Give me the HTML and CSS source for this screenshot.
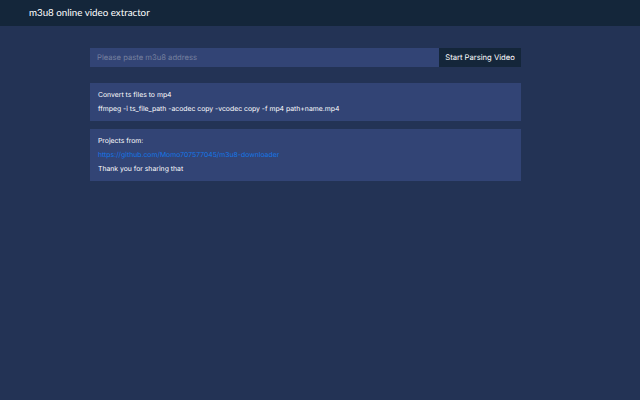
FILE: index.html
```
<!DOCTYPE html>
<html lang="en">
<head>
<meta charset="UTF-8">
<meta name="viewport" content="width=device-width, initial-scale=1.0">
<title>m3u8 online video extractor</title>
<link rel="stylesheet" href="styles.css">
</head>
<body>

<div class="header">
    <span class="logo">m3u8 online video extractor</span>
</div>

<div class="contenuto">
    <div class="ricerca">
        <input class="casella" type="text" placeholder="Please paste m3u8 address">
        <button class="button">Start Parsing Video</button>
    </div>

    <div class="card">
        <p>Convert ts files to mp4</p>
        <p>ffmpeg -i ts_file_path -acodec copy -vcodec copy -f mp4 path+name.mp4</p>
    </div>

    <div class="card">
        <p>Projects from:</p>
        <p><a href="#">https://github.com/Momo707577045/m3u8-downloader</a></p>
        <p>Thank you for sharing that</p>
    </div>
</div>

</body>
</html>
```

FILE: styles.css
```
body{margin: 0;
    background-color: #233355;
    font-family: Inter, "Liberation Sans", sans-serif;
    font-size: 6.85px;
    text-rendering: geometricPrecision;
    color: #ffffff;}

.header{height: 26px;
    display: flex;
    align-items: center;
    padding-left: 29px;
    background-color: #14263a;}

.logo{font-family: "Lato", sans-serif;
    font-weight: 400;
    font-size: 9.75px;
    color: #ffffff;}

.contenuto{width: 431px;
    margin: 22px 0 0 90px;}

.ricerca{display: flex;
    height: 19px;
    margin-bottom: 16px;}

.casella{flex: 1;
    min-width: 0;
    box-sizing: border-box;
    padding: 0 7px;
    border: none;
    outline: none;
    background-color: #324475;
    color: #ffffff;
    font-family: Inter, "Liberation Sans", sans-serif;
    font-size: 7.65px;
    text-rendering: geometricPrecision;}

.casella::placeholder{color: #76809f;}

.button{width: 82px;
    padding: 0;
    border: none;
    background-color: #14263a;
    color: #ffffff;
    font-family: Inter, "Liberation Sans", sans-serif;
    font-size: 7.65px;
    text-rendering: geometricPrecision;
    cursor: pointer;}

.card{padding: 5px 8px;
    margin-bottom: 8px;
    background-color: #324475;}

.card p{margin: 0;
    line-height: 14px;}

.card a{color: #1477e8;
    text-decoration: none;}
```
